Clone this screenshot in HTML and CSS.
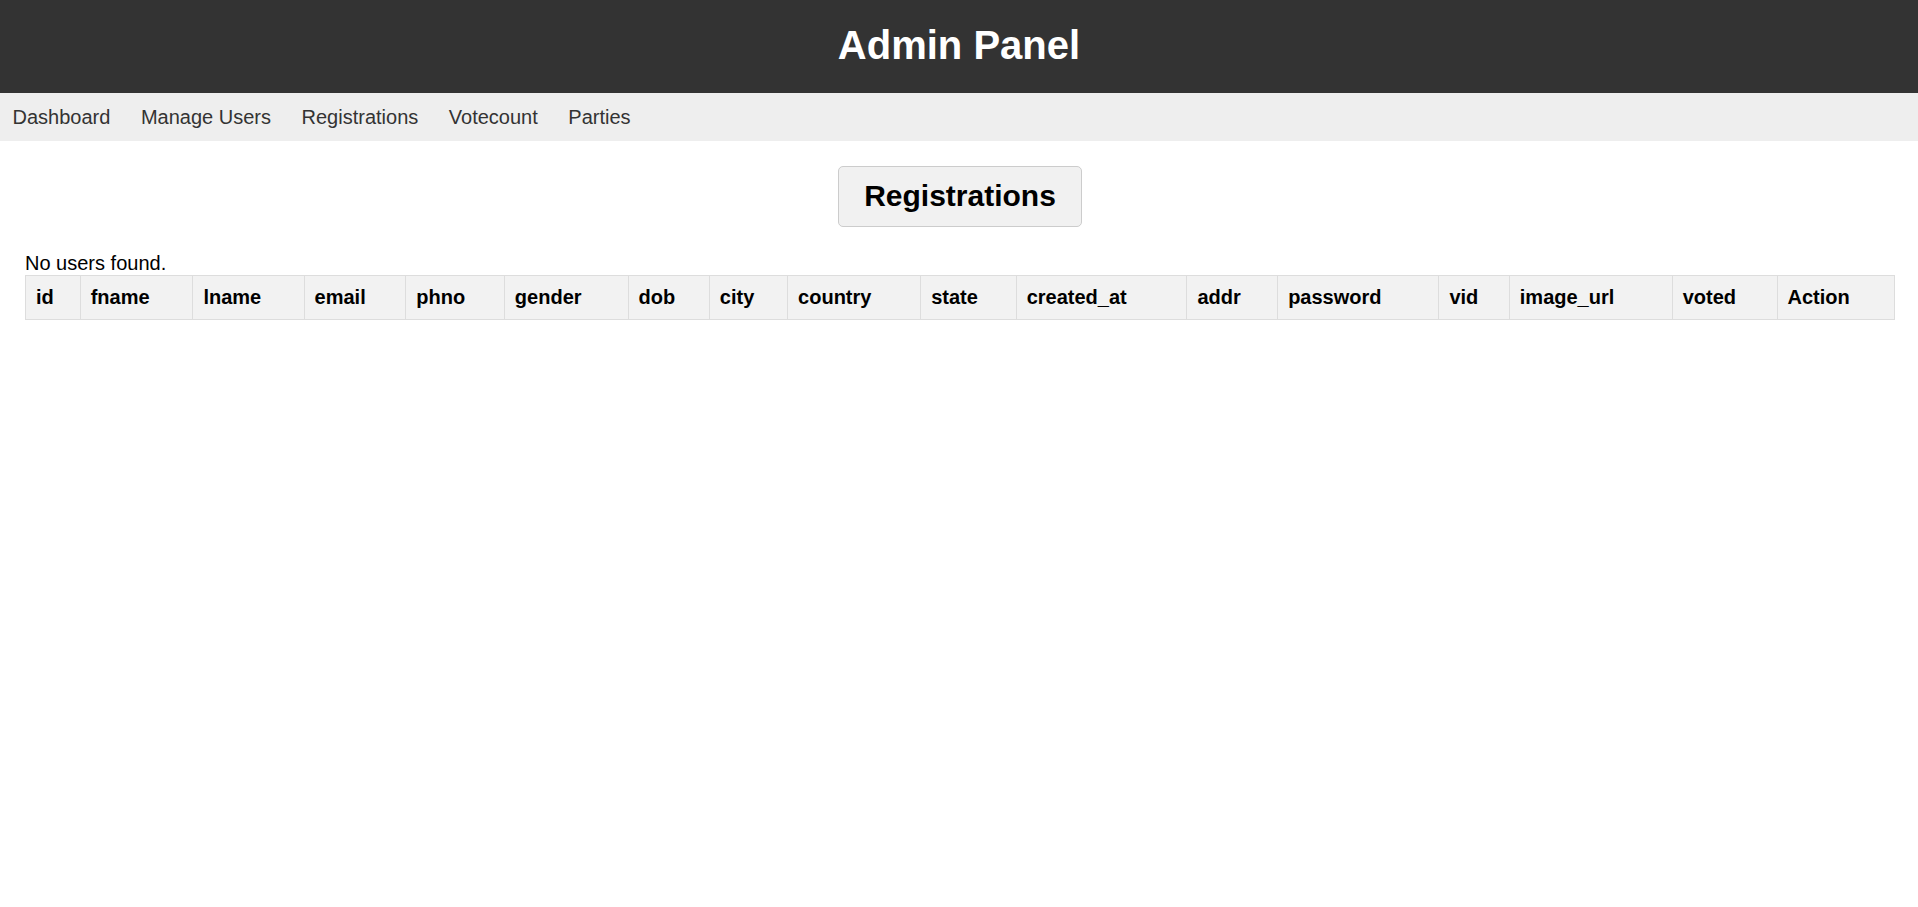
FILE: index.html
```html
<!DOCTYPE html>
<html lang="en">
<head>
<meta charset="utf-8">
<title>Admin Panel</title>
<link rel="stylesheet" href="styles.css">
</head>
<body>
<header class="topbar">
  <h1 class="topbar-title">Admin Panel</h1>
</header>
<nav class="mainnav">
  <a href="#" class="navlink">Dashboard</a>
  <a href="#" class="navlink">Manage Users</a>
  <a href="#" class="navlink">Registrations</a>
  <a href="#" class="navlink">Votecount</a>
  <a href="#" class="navlink">Parties</a>
</nav>
<main class="content">
  <div class="heading-wrap">
    <h2 class="page-heading">Registrations</h2>
  </div>
  <p class="empty-note">No users found.</p>
  <table class="data-table">
    <thead>
      <tr>
        <th>id</th>
        <th>fname</th>
        <th>lname</th>
        <th>email</th>
        <th>phno</th>
        <th>gender</th>
        <th>dob</th>
        <th>city</th>
        <th>country</th>
        <th>state</th>
        <th>created_at</th>
        <th>addr</th>
        <th>password</th>
        <th>vid</th>
        <th>image_url</th>
        <th>voted</th>
        <th>Action</th>
      </tr>
    </thead>
  </table>
</main>
</body>
</html>
```

FILE: styles.css
```css
html, body {
  margin: 0;
  padding: 0;
  background: #ffffff;
}

body {
  font-family: "Liberation Sans", Arial, sans-serif;
  font-size: 20px;
  color: #000000;
}

.topbar {
  background: #333333;
  color: #ffffff;
  padding: 22px 0 25px;
  text-align: center;
}

.topbar-title {
  margin: 0;
  font-size: 40px;
  line-height: 46px;
  font-weight: bold;
}

.mainnav {
  background: #eeeeee;
  padding: 12.5px 12.5px;
  line-height: 23px;
}

.navlink {
  color: #333333;
  text-decoration: none;
  margin-right: 25px;
}

.content {
  padding: 0 23px 0 25px;
}

.heading-wrap {
  text-align: center;
  padding-top: 25px;
}

.page-heading {
  display: inline-block;
  margin: 0;
  font-size: 30px;
  line-height: 34.5px;
  font-weight: bold;
  padding: 12px 25px;
  background: #f1f1f1;
  border: 1px solid #cccccc;
  border-radius: 5px;
}

.empty-note {
  margin: 25px 0 0;
  line-height: 23px;
}

.data-table {
  width: 100%;
  border-collapse: collapse;
}

.data-table th {
  background: #f2f2f2;
  border: 1px solid #dddddd;
  padding: 10px;
  text-align: left;
  font-weight: bold;
  line-height: 23px;
}
```
